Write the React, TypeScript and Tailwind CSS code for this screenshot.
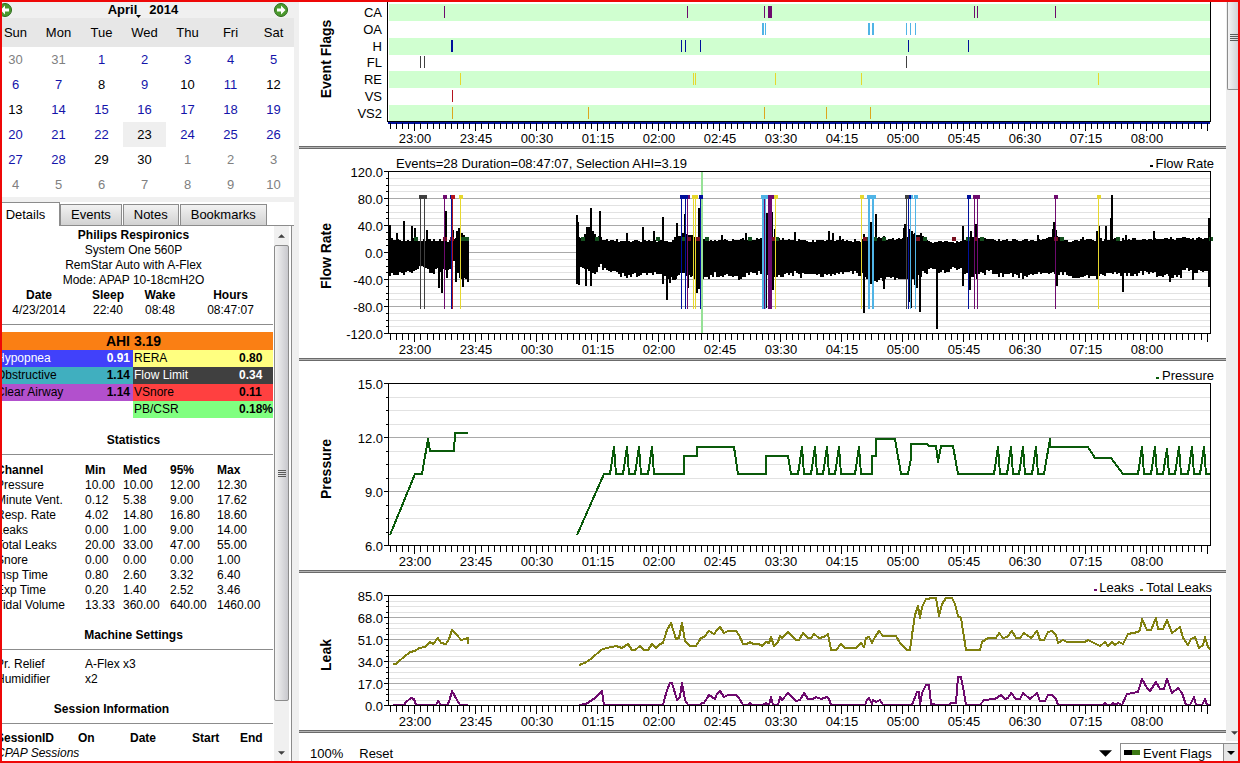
import React from "react";
import clsx from "clsx";

type Point = [number, number];

const WEEKDAYS = ["Sun", "Mon", "Tue", "Wed", "Thu", "Fri", "Sat"];

const WEEKS = [
  [30, 31, 1, 2, 3, 4, 5],
  [6, 7, 8, 9, 10, 11, 12],
  [13, 14, 15, 16, 17, 18, 19],
  [20, 21, 22, 23, 24, 25, 26],
  [27, 28, 29, 30, 1, 2, 3],
  [4, 5, 6, 7, 8, 9, 10],
];

// days of the month without recorded data
const EMPTY_DAYS = [8, 10, 12, 13, 23, 29, 30];

const STATS = [
  ["Pressure", "10.00", "10.00", "12.00", "12.30"],
  ["Minute Vent.", "0.12", "5.38", "9.00", "17.62"],
  ["Resp. Rate", "4.02", "14.80", "16.80", "18.60"],
  ["Leaks", "0.00", "1.00", "9.00", "14.00"],
  ["Total Leaks", "20.00", "33.00", "47.00", "55.00"],
  ["Snore", "0.00", "0.00", "0.00", "1.00"],
  ["Insp Time", "0.80", "2.60", "3.32", "6.40"],
  ["Exp Time", "0.20", "1.40", "2.52", "3.46"],
  ["Tidal Volume", "13.33", "360.00", "640.00", "1460.00"],
];

const TIMES = [
  "23:00", "23:45", "00:30", "01:15", "02:00", "02:45", "03:30",
  "04:15", "05:00", "05:45", "06:30", "07:15", "08:00",
];

// every chart shares the same time axis
const LEFT = 89;
const RIGHT = 911;
const TOP = 22;
const TICK = 6.094;

interface FlagRow {
  code: string;
  color: string;
  // [x, width]
  marks: Point[];
}

const FLAGS: FlagRow[] = [
  { code: "CA", color: "#6e0a6e", marks: [[144, 1], [387, 1], [464, 1], [468, 4], [674, 1], [677, 1], [755, 1]] },
  { code: "OA", color: "#50b4e6", marks: [[462, 2], [465, 1], [568, 2], [572, 2], [606, 1], [610, 1], [615, 1]] },
  { code: "H", color: "#00109b", marks: [[151, 2], [381, 1], [385, 1], [400, 1], [608, 1], [668, 1]] },
  { code: "FL", color: "#404040", marks: [[120, 1], [124, 1], [606, 1]] },
  { code: "RE", color: "#e6d72d", marks: [[160, 1], [393, 1], [395, 1], [475, 1], [561, 1], [798, 1]] },
  { code: "VS", color: "#b4141e", marks: [[152, 1]] },
  { code: "VS2", color: "#dca51e", marks: [[152, 1], [288, 1], [464, 1], [526, 1], [570, 1]] },
];

const PRESSURE_1: Point[] = [
  [90, 174], [115, 113], [122, 113], [128, 78], [130, 90], [154, 90], [155, 72], [168, 72],
];

const spike = (x: number, top = 86): Point[] => [[x - 4, 113], [x, top], [x + 2, 113]];

const PRESSURE_2: Point[] = [
  [277, 174], [304, 113],
  ...spike(314), ...spike(327), ...spike(339), ...spike(352),
  [384, 113], [384, 95], [397, 95], [397, 86], [434, 86], [438, 113], [466, 113], [466, 95], [488, 95], [491, 113],
  ...spike(502), ...spike(515), ...spike(527), ...spike(539), ...spike(559),
  [572, 113], [572, 95], [576, 95], [576, 78], [595, 78], [601, 113], [608, 113], [611, 97], [611, 83], [627, 83],
  [629, 85], [636, 85], [638, 101], [641, 85], [653, 85], [658, 113],
  ...spike(698), ...spike(711), ...spike(723), ...spike(736),
  [744, 113], [750, 78], [750, 86], [788, 86], [795, 97], [811, 97], [823, 113],
  ...spike(842), ...spike(855), ...spike(867, 88), ...spike(879), ...spike(892), ...spike(904),
  [911, 113],
];

const TOTAL_1: Point[] = [
  [93, 91], [96, 91], [99, 88], [104, 84], [110, 79], [115, 78], [119, 75], [125, 74], [130, 69], [133, 71],
  [138, 65], [141, 70], [146, 71], [149, 66], [152, 57], [157, 62], [161, 67], [165, 66], [168, 65], [168, 71],
];

const TOTAL_2: Point[] = [
  [279, 93], [281, 91], [285, 90], [292, 85], [301, 77], [306, 75], [312, 74], [316, 73], [322, 75], [328, 71],
  [332, 77], [335, 77], [340, 73], [344, 77], [348, 77], [352, 71], [356, 75], [360, 71], [363, 70], [367, 57],
  [371, 50], [376, 66], [379, 65], [382, 50], [385, 68], [390, 73], [396, 73], [401, 65], [404, 64], [409, 58],
  [414, 61], [417, 57], [420, 54], [424, 60], [428, 58], [436, 58], [439, 62], [443, 71], [447, 71], [450, 69],
  [453, 71], [459, 71], [462, 73], [466, 69], [469, 70], [471, 64], [474, 73], [478, 69], [480, 63], [482, 65],
  [488, 59], [496, 67], [499, 67], [503, 60], [508, 65], [511, 65], [514, 61], [519, 65], [524, 64], [528, 61],
  [531, 77], [536, 77], [541, 71], [545, 75], [556, 75], [561, 70], [564, 74], [566, 65], [569, 64], [572, 70],
  [575, 64], [579, 58], [583, 63], [596, 63], [600, 70], [607, 77], [610, 77], [613, 55], [615, 42], [618, 33],
  [620, 45], [622, 34], [626, 26], [633, 25], [636, 25], [639, 43], [642, 31], [646, 25], [652, 25], [655, 31],
  [658, 43], [661, 45], [666, 77], [680, 77], [682, 69], [688, 65], [696, 65], [699, 60], [703, 65], [707, 64],
  [712, 58], [716, 65], [720, 65], [724, 60], [731, 65], [737, 58], [740, 67], [744, 67], [748, 59], [752, 58],
  [756, 62], [758, 70], [763, 67], [767, 69], [785, 69], [788, 67], [794, 70], [800, 73], [805, 69], [808, 73],
  [812, 69], [815, 72], [819, 69], [823, 71], [828, 61], [838, 59], [840, 57], [842, 46], [847, 57], [851, 57],
  [856, 45], [858, 56], [863, 56], [867, 47], [872, 60], [880, 54], [883, 65], [888, 72], [891, 66], [895, 64],
  [899, 75], [903, 72], [905, 64], [908, 74], [911, 77],
];

const LEAKS_1: Point[] = [
  [93, 132], [104, 132], [106, 129], [111, 125], [114, 126], [116, 132], [136, 132], [138, 128], [141, 132],
  [147, 132], [149, 129], [152, 118], [157, 127], [160, 132], [168, 132],
];

const LEAKS_2: Point[] = [
  [279, 132], [286, 131], [295, 125], [302, 118], [304, 132], [363, 132], [367, 117], [370, 110], [372, 110],
  [377, 127], [380, 124], [382, 110], [385, 127], [388, 132], [400, 132], [402, 130], [404, 130], [409, 122],
  [415, 126], [417, 121], [420, 118], [424, 124], [428, 122], [436, 122], [439, 125], [443, 132], [448, 132],
  [450, 130], [452, 132], [463, 132], [466, 130], [469, 132], [471, 124], [473, 132], [478, 132], [480, 124],
  [482, 127], [488, 120], [496, 128], [500, 127], [504, 120], [508, 126], [513, 126], [516, 124], [521, 126],
  [527, 124], [529, 126], [531, 132], [565, 132], [567, 127], [569, 125], [572, 131], [573, 127], [576, 129],
  [580, 127], [583, 132], [612, 132], [617, 119], [619, 119], [620, 132], [622, 120], [626, 112], [629, 112],
  [631, 131], [634, 131], [636, 132], [649, 132], [651, 130], [656, 130], [658, 104], [661, 104], [664, 120],
  [666, 132], [680, 132], [684, 127], [695, 126], [701, 122], [705, 126], [708, 125], [711, 120], [716, 126],
  [720, 126], [723, 120], [730, 126], [737, 120], [740, 128], [745, 128], [748, 122], [752, 122], [756, 126],
  [758, 132], [803, 132], [805, 130], [807, 132], [811, 132], [813, 130], [815, 132], [818, 130], [822, 132],
  [827, 121], [838, 119], [842, 106], [847, 115], [850, 118], [856, 109], [860, 116], [864, 116], [867, 106],
  [872, 120], [878, 115], [882, 120], [886, 132], [890, 132], [894, 124], [896, 132], [902, 132], [905, 126],
  [907, 132], [911, 132],
];

// lower edge of the breathing wave
const FLOW_FLOOR: Point[] = [
  [89, 123], [105, 122], [120, 118], [130, 121], [150, 118], [153, 111], [156, 121], [162, 129], [169, 130],
  [276, 121], [282, 118], [290, 124], [295, 121], [300, 116], [310, 121], [325, 126], [345, 123], [360, 124],
  [370, 129], [380, 124], [400, 128], [415, 124], [430, 126], [440, 128], [450, 121], [462, 123], [470, 128],
  [480, 125], [495, 122], [500, 125], [520, 125], [545, 121], [560, 124], [575, 129], [600, 128], [620, 124],
  [630, 119], [640, 122], [655, 118], [670, 124], [685, 124], [688, 118], [692, 124], [720, 125], [760, 123],
  [780, 127], [800, 124], [830, 124], [850, 122], [860, 126], [880, 125], [884, 118], [893, 121], [911, 120],
];

const FLOW_CEILING: Point[] = [
  [89, 91], [150, 92], [158, 86], [162, 84], [165, 90], [276, 88], [282, 91], [285, 84], [292, 84], [300, 90],
  [310, 92], [370, 92], [378, 86], [390, 86], [395, 90], [402, 90], [410, 92], [470, 90], [510, 92], [560, 92],
  [568, 88], [580, 90], [604, 90], [612, 85], [622, 88], [630, 93], [655, 93], [672, 90], [730, 92], [752, 88],
  [758, 88], [765, 93], [800, 91], [820, 91], [880, 90], [911, 90],
];

const FLOW_PEAKS: Point[] = [
  [90, 76], [97, 84], [104, 72], [112, 77], [115, 79], [127, 81], [146, 62], [153, 81], [157, 82], [159, 79],
  [277, 66], [278, 73], [287, 78], [289, 78], [291, 59], [293, 82], [300, 62], [327, 84], [343, 78], [354, 82],
  [363, 68], [377, 74], [385, 65], [399, 59], [402, 83], [422, 86], [446, 84], [467, 64], [469, 76], [472, 63],
  [475, 80], [495, 83], [529, 82], [533, 84], [540, 87], [564, 85], [571, 73], [576, 65], [584, 87], [604, 79],
  [605, 75], [609, 80], [612, 82], [621, 84], [663, 77], [671, 82], [676, 75], [738, 86], [753, 80], [754, 73],
  [756, 81], [783, 88], [797, 82], [799, 77], [806, 77], [811, 69], [812, 46], [826, 86], [854, 82], [909, 69],
];

const FLOW_DIPS: Point[] = [
  [139, 139], [142, 144], [147, 129], [156, 133], [163, 138], [277, 135], [279, 136], [286, 137], [291, 137],
  [363, 135], [367, 151], [370, 134], [376, 130], [388, 139], [397, 144], [399, 140], [466, 159], [473, 141],
  [469, 132], [564, 164], [571, 135], [584, 140], [609, 153], [611, 159], [615, 136], [617, 139], [620, 163],
  [637, 180], [663, 137], [670, 141], [677, 130], [723, 130], [757, 137], [797, 130], [823, 143], [870, 133],
  [893, 131], [909, 138],
];

const GREEN_DOTS = [
  116, 163, 167, 283, 297, 358, 384, 407, 450, 477, 568, 575, 584, 625, 668, 682, 762, 818, 911,
];
const RED_DOTS = [145, 152, 389, 398, 473, 565, 618, 654, 676, 756];

const toPoints = (pts: Point[]) => pts.map((p) => p.join(",")).join(" ");

function lerp(pts: Point[], x: number) {
  const i = pts.findIndex((p) => p[0] >= x);
  if (i <= 0) return pts[i === 0 ? 0 : pts.length - 1][1];
  const [x0, y0] = pts[i - 1];
  const [x1, y1] = pts[i];
  return y0 + ((x - x0) / (x1 - x0)) * (y1 - y0);
}

function jitter(n: number) {
  const v = Math.sin(n * 12.9898) * 43758.5453;
  return v - Math.floor(v);
}

function wave(from: number, to: number) {
  let d = "";
  for (let x = from; x < to; x += 2) {
    const top = Math.round(lerp(FLOW_CEILING, x) + jitter(x) * 3 - 2);
    const bottom = Math.round(lerp(FLOW_FLOOR, x) + jitter(x + 500) * 5 - 1);
    d += `M${x} ${top}h${Math.min(2, to - x)}V${bottom}H${x}z`;
  }
  return d;
}

function Frame({
  height,
  title,
  titleY,
  labels,
  children,
}: {
  height: number;
  title: string;
  titleY: number;
  labels: string[];
  children: React.ReactNode;
}) {
  const step = height / (labels.length - 1);
  const bottom = TOP + height;
  const minor = (labels.length - 1) * 4;

  return (
    <svg
      viewBox={`-1 0 927 ${height + 47}`}
      className="block w-full bg-white font-['Liberation_Sans',sans-serif] text-[13px]"
      role="img"
      aria-label={title}
    >
      <g shapeRendering="crispEdges">
        {Array.from({ length: minor + 1 }, (_, i) => {
          const y = Math.round(TOP + (i * step) / 4);
          const major = i % 4 === 0;
          return (
            <g key={i}>
              <rect x={LEFT} y={y} width={RIGHT - LEFT} height="1" fill={major ? "#a9a9a9" : "#e2e2e2"} />
              <rect x={major ? 84 : 86} y={y} width={major ? 5 : 3} height="1" fill="#000" />
            </g>
          );
        })}
      </g>
      {labels.map((l, i) => (
        <text key={l} x="83" y={Math.round(TOP + i * step) + 6} textAnchor="end">
          {l}
        </text>
      ))}
      <YTitle y={titleY}>{title}</YTitle>
      {children}
      <path
        d={`M88.5 ${TOP}.5H910.5V${bottom}.5H88.5z`}
        fill="none"
        stroke="#000"
        shapeRendering="crispEdges"
      />
      <TimeAxis y={bottom + 1} />
    </svg>
  );
}

function YTitle({ y, children }: { y: number; children: string }) {
  return (
    <text transform={`translate(31 ${y}) rotate(-90)`} textAnchor="middle" className="text-sm font-bold">
      {children}
    </text>
  );
}

function TimeAxis({ y }: { y: number }) {
  return (
    <g>
      <g shapeRendering="crispEdges">
        {Array.from({ length: 135 }, (_, k) => (
          <rect
            key={k}
            x={Math.round(90 + k * TICK)}
            y={y}
            width="1"
            height={k % 10 === 4 ? 8 : 6}
          />
        ))}
      </g>
      {TIMES.map((t, i) => (
        <text key={t} x={Math.round(90 + (4 + i * 10) * TICK) + 1} y={y + 20} textAnchor="middle">
          {t}
        </text>
      ))}
    </g>
  );
}

function Trace({ points, color }: { points: Point[]; color: string }) {
  return (
    <polyline
      points={toPoints(points)}
      fill="none"
      stroke={color}
      strokeWidth="2"
      strokeLinejoin="round"
      shapeRendering="crispEdges"
    />
  );
}

function EventFlagsChart() {
  return (
    <svg
      viewBox="-1 0 927 144"
      className="block w-full bg-white font-['Liberation_Sans',sans-serif] text-[13px]"
      role="img"
      aria-label="Event Flags"
    >
      {FLAGS.map((row, i) => {
        const y = Math.round(2 + i * 16.8);
        return (
          <g key={row.code} shapeRendering="crispEdges">
            {i % 2 === 0 && <rect x="89" y={y} width="821" height="17" fill="#d0ffd0" />}
            {row.marks.map(([x, w]) => (
              <rect key={x} x={x} y={y + 2} width={w} height="12" fill={row.color} />
            ))}
            <text x="82" y={y + 13} textAnchor="end">
              {row.code}
            </text>
          </g>
        );
      })}
      <YTitle y={57}>Event Flags</YTitle>
      <rect x="87" y="0" width="1" height="120" />
      <rect x="910" y="0" width="1" height="120" />
      <rect x="87" y="119" width="824" height="1" />
      <rect x="88" y="120" width="822" height="2" fill="#00109b" />
      <TimeAxis y={121} />
    </svg>
  );
}

function FlowChart() {
  return (
    <Frame
      height={162}
      title="Flow Rate"
      titleY={107}
      labels={["120.0", "80.0", "40.0", "0.0", "-40.0", "-80.0", "-120.0"]}
    >
      <text x="96" y="19">
        Events=28 Duration=08:47:07, Selection AHI=3.19
      </text>
      <rect x="850" y="16" width="3" height="2" />
      <text x="914" y="19" textAnchor="end">
        Flow Rate
      </text>
      <g shapeRendering="crispEdges">
        <path d={wave(89, 169) + wave(276, 911)} />
        {FLOW_PEAKS.map(([x, y]) => (
          <rect key={x} x={x - 1} y={y} width="2" height={104 - y} />
        ))}
        {FLOW_DIPS.map(([x, y]) => (
          <rect key={x} x={x - 1} y="104" width="2" height={y - 104} />
        ))}
        {GREEN_DOTS.map((x) => (
          <rect key={x} x={x - 2} y="88" width="4" height="4" fill="#14501e" />
        ))}
        {RED_DOTS.map((x) => (
          <rect key={x} x={x - 2} y="88" width="4" height="4" fill="#780f1e" />
        ))}
        <rect x="401" y="23" width="2" height="161" fill="#96e196" />
        {FLAGS.filter((row) => row.code !== "VS2").map((row) =>
          row.marks.map(([x, w]) => (
            <g key={row.code + x} fill={row.color}>
              <rect x={x} y="48" width={w} height="112" />
              <rect x={x - 1} y="46" width={w + 3} height="4" />
            </g>
          ))
        )}
      </g>
    </Frame>
  );
}

function PressureChart() {
  return (
    <Frame height={162} title="Pressure" titleY={108} labels={["15.0", "12.0", "9.0", "6.0"]}>
      <rect x="856" y="16" width="3" height="2" fill="#0a5a0a" />
      <text x="914" y="19" textAnchor="end">
        Pressure
      </text>
      <Trace points={PRESSURE_1} color="#0a5a0a" />
      <Trace points={PRESSURE_2} color="#0a5a0a" />
    </Frame>
  );
}

function LeakChart() {
  return (
    <Frame height={110} title="Leak" titleY={82} labels={["85.0", "68.0", "51.0", "34.0", "17.0", "0.0"]}>
      <rect x="794" y="16" width="3" height="2" fill="#6e0a6e" />
      <text x="834" y="19" textAnchor="end">
        Leaks
      </text>
      <rect x="840" y="16" width="3" height="2" fill="#80800f" />
      <text x="912" y="19" textAnchor="end">
        Total Leaks
      </text>
      <Trace points={TOTAL_1} color="#80800f" />
      <Trace points={TOTAL_2} color="#80800f" />
      <Trace points={LEAKS_1} color="#6e0a6e" />
      <Trace points={LEAKS_2} color="#6e0a6e" />
    </Frame>
  );
}

function Divider() {
  return <div className="h-[3px] border-y border-[#6b6b6b] bg-[#b4b4b4]" />;
}

function ArrowButton({ label, flip }: { label: string; flip?: boolean }) {
  return (
    <button aria-label={label} className="h-4 w-4 shrink-0">
      <svg viewBox="0 0 16 16" className={clsx("h-4 w-4", flip && "rotate-180")}>
        <circle cx="8" cy="8" r="6.5" fill="#4c9a2e" stroke="#2d6a1c" />
        <path d="M4 6.500h4V3.500L12.500 8 8 12.500V9.500H4z" fill="#fff" />
      </svg>
    </button>
  );
}

function Calendar() {
  return (
    <section className="-ml-2 w-[301px] bg-white">
      <div className="flex h-4 items-center justify-between bg-[#f0f0f0] pl-[3px] pr-[6px] text-[13px] font-bold">
        <ArrowButton label="Previous month" flip />
        <div className="flex items-center gap-3">
          <button className="relative leading-4">
            April
            <svg viewBox="0 0 5 3" className="absolute -right-1 bottom-0 h-[3px] w-[5px]">
              <path d="M0 0h5L2.500 3z" />
            </svg>
          </button>
          <button className="leading-4">2014</button>
        </div>
        <ArrowButton label="Next month" />
      </div>
      <table className="w-full table-fixed border-collapse text-center text-[13px]">
        <thead className="bg-[#e7e7e7]">
          <tr className="h-[29px]">
            {WEEKDAYS.map((d) => (
              <th key={d} scope="col" className="p-0 font-normal">
                {d}
              </th>
            ))}
          </tr>
        </thead>
        <tbody>
          {WEEKS.map((week, w) => (
            <tr key={w} className="h-[25px]">
              {week.map((day) => {
                const outside = (w === 0 && day > 20) || (w > 3 && day < 15);
                return (
                  <td
                    key={day}
                    className={clsx(
                      "p-0",
                      outside
                        ? "text-[#808080]"
                        : EMPTY_DAYS.includes(day)
                          ? "text-black"
                          : "text-[#1414aa]",
                      !outside && day === 23 && "bg-[#efefef]"
                    )}
                  >
                    {day}
                  </td>
                );
              })}
            </tr>
          ))}
        </tbody>
      </table>
    </section>
  );
}

function Tabs() {
  return (
    <div role="tablist" className="flex h-6 items-end bg-white text-[13px]">
      <button role="tab" aria-selected="true" className="h-6 w-[58px] border-r border-t border-[#8c8c8c] bg-white pr-2.5">
        Details
      </button>
      <div className="flex flex-1 gap-px border-b border-[#8c8c8c]">
        {["Events", "Notes", "Bookmarks"].map((t) => (
          <button
            key={t}
            role="tab"
            aria-selected="false"
            className="h-[21px] border-x border-t border-[#8c8c8c] bg-linear-to-b from-[#f2f2f2] to-[#d2d2d2] px-2.5"
          >
            {t}
          </button>
        ))}
      </div>
    </div>
  );
}

function Heading({ children, className }: { children: string; className?: string }) {
  return (
    <h2 className={clsx("border-b border-[#8c8c8c] pb-1.5 text-center font-bold", className)}>
      {children}
    </h2>
  );
}

function Details() {
  return (
    <div className="-ml-2 w-[279px] shrink-0 pt-0.5 text-xs leading-[15px]">
      <div className="text-center">
        <p className="font-bold">Philips Respironics</p>
        <p>System One 560P</p>
        <p>RemStar Auto with A-Flex</p>
        <p>Mode: APAP 10-18cmH2O</p>
      </div>
      <table className="w-full table-fixed text-center">
        <thead>
          <tr>
            <th scope="col" className="w-[90px]">Date</th>
            <th scope="col" className="w-12">Sleep</th>
            <th scope="col" className="w-14">Wake</th>
            <th scope="col">Hours</th>
          </tr>
        </thead>
        <tbody>
          <tr>
            <td>4/23/2014</td>
            <td>22:40</td>
            <td>08:48</td>
            <td>08:47:07</td>
          </tr>
        </tbody>
      </table>
      <hr className="mb-[7px] mt-1.5 border-[#8c8c8c]" />

      {/* event index summary */}
      <table className="w-full table-fixed text-left leading-[17px]">
        <colgroup>
          <col className="w-[100px]" />
          <col className="w-[39px]" />
          <col className="w-[106px]" />
          <col />
        </colgroup>
        <thead>
          <tr className="bg-[#fa7f14]">
            <th colSpan={4} scope="colgroup" className="text-center text-sm leading-[18px]">
              AHI 3.19
            </th>
          </tr>
        </thead>
        <tbody>
          <tr>
            <td className="bg-[#4141fa] pl-0.5 text-white">Hypopnea</td>
            <td className="bg-[#4141fa] pr-[3px] text-right font-bold text-white">0.91</td>
            <td className="bg-[#ffff80] pl-px">RERA</td>
            <td className="bg-[#ffff80] font-bold">0.80</td>
          </tr>
          <tr>
            <td className="bg-[#40afbf] pl-0.5">Obstructive</td>
            <td className="bg-[#40afbf] pr-[3px] text-right font-bold">1.14</td>
            <td className="bg-[#404040] pl-px text-white">Flow Limit</td>
            <td className="bg-[#404040] font-bold text-white">0.34</td>
          </tr>
          <tr>
            <td className="bg-[#b250cd] pl-0.5">Clear Airway</td>
            <td className="bg-[#b250cd] pr-[3px] text-right font-bold">1.14</td>
            <td className="bg-[#ff4040] pl-px">VSnore</td>
            <td className="bg-[#ff4040] font-bold">0.11</td>
          </tr>
          <tr>
            <td colSpan={2} />
            <td className="bg-[#80ff80] pl-px">PB/CSR</td>
            <td className="bg-[#80ff80] font-bold">0.18%</td>
          </tr>
        </tbody>
      </table>

      <Heading className="mt-[15px]">Statistics</Heading>
      <table className="mt-2 w-full table-fixed text-left">
        <thead>
          <tr>
            <th scope="col" className="w-[91px] pl-0.5">Channel</th>
            <th scope="col" className="w-[38px]">Min</th>
            <th scope="col" className="w-[47px]">Med</th>
            <th scope="col" className="w-[47px]">95%</th>
            <th scope="col">Max</th>
          </tr>
        </thead>
        <tbody>
          {STATS.map(([name, ...values]) => (
            <tr key={name}>
              <td className="pl-0.5">{name}</td>
              {values.map((v, i) => (
                <td key={i}>{v}</td>
              ))}
            </tr>
          ))}
        </tbody>
      </table>

      <Heading className="mt-[15px]">Machine Settings</Heading>
      <dl className="mt-[7px] grid grid-cols-[91px_1fr]">
        <dt className="pl-0.5">Pr. Relief</dt>
        <dd>A-Flex x3</dd>
        <dt className="pl-0.5">Humidifier</dt>
        <dd>x2</dd>
      </dl>

      <Heading className="mt-[15px] pr-11">Session Information</Heading>
      <table className="mt-[7px] w-full table-fixed text-left">
        <thead>
          <tr>
            <th scope="col" className="w-[84px] pl-0.5">SessionID</th>
            <th scope="col" className="w-[52px]">On</th>
            <th scope="col" className="w-[62px]">Date</th>
            <th scope="col" className="w-12">Start</th>
            <th scope="col">End</th>
          </tr>
        </thead>
        <tbody>
          <tr>
            <td colSpan={5} className="pl-0.5 italic">CPAP Sessions</td>
          </tr>
        </tbody>
      </table>
    </div>
  );
}

function Grip() {
  return (
    <div className="flex h-[7px] w-2 flex-col justify-between">
      <div className="h-px bg-[#5a5a5a]" />
      <div className="h-px bg-[#5a5a5a]" />
      <div className="h-px bg-[#5a5a5a]" />
      <div className="h-px bg-[#5a5a5a]" />
    </div>
  );
}

function Triangle({ up, className }: { up?: boolean; className: string }) {
  return (
    <svg viewBox="0 0 10 5" className={clsx(className, up && "rotate-180")}>
      <path d="M0 0h10L5 5z" fill="currentColor" />
    </svg>
  );
}

export default function App() {
  return (
    <div className="flex h-screen overflow-hidden border-2 border-[#ee0808] bg-[#f0f0f0] font-['Liberation_Sans',Arial,sans-serif] text-black">
      {/* Sidebar */}
      <aside className="mr-[5px] flex w-[292px] shrink-0 flex-col overflow-hidden">
        <Calendar />
        <div className="mt-[5px]">
          <Tabs />
        </div>
        <div className="mr-[2px] flex min-h-0 flex-1 overflow-hidden border-r border-[#8c8c8c] bg-white">
          <Details />
          <div className="ml-px flex w-[15px] flex-col items-center bg-[#f0f0f0]">
            <button aria-label="Scroll up" className="flex h-[19px] w-full shrink-0 items-center justify-center">
              <Triangle up className="h-[4px] w-[7px] text-[#404040]" />
            </button>
            <div className="flex w-[15px] flex-1 items-center justify-center rounded-xs border border-[#8c8c8c] bg-linear-to-r from-[#f4f4f4] to-[#c8c8cd]">
              <Grip />
            </div>
            <button aria-label="Scroll down" className="flex h-[60px] w-full shrink-0 items-end justify-center pb-[6px]">
              <Triangle className="h-[4px] w-[7px] text-[#404040]" />
            </button>
          </div>
        </div>
      </aside>

      {/* Graphs */}
      <main className="flex min-w-0 flex-1 flex-col bg-white">
        <div className="flex min-h-0 flex-1">
          <div className="min-w-0 flex-1 overflow-hidden">
            <EventFlagsChart />
            <Divider />
            <FlowChart />
            <Divider />
            <PressureChart />
            <Divider />
            <LeakChart />
            <Divider />
          </div>
          <div className="flex w-3 shrink-0 flex-col justify-between bg-[#eeeeee] pl-px">
            <div className="flex h-22 items-center justify-end overflow-hidden rounded-bl-xs border-b border-l border-[#8c8c8c] bg-linear-to-r from-[#f4f4f4] to-[#d2d2d7] pb-4">
              <Grip />
            </div>
            <button aria-label="Scroll graphs down" className="flex h-4 items-center justify-end">
              <Triangle className="h-[4px] w-[7px] text-[#404040]" />
            </button>
          </div>
        </div>
        <footer className="flex h-5 shrink-0 items-end text-[13px] leading-[14px]">
          <span className="pl-[11px]">100%</span>
          <button className="ml-4">Reset</button>
          <button aria-label="Show graphs" className="ml-auto mr-2 pb-1">
            <Triangle className="h-[7px] w-[13px]" />
          </button>
          <div className="relative flex h-[18px] w-[118px] items-center border-l border-t border-[#8c8c8c]">
            <div aria-hidden="true" className="pointer-events-none absolute left-[3px] flex h-[5px] w-4">
              <div className="flex-1 bg-black" />
              <div className="flex-1 bg-[#3c7814]" />
            </div>
            <select aria-label="Graph" className="h-full w-full appearance-none bg-transparent pl-[22px] pt-0.5">
              <option>Event Flags</option>
            </select>
            <div className="pointer-events-none absolute right-0 top-0 flex h-full w-[15px] items-center justify-center border-l border-[#8c8c8c] bg-[#e6e6e6]">
              <Triangle className="h-[4px] w-[8px]" />
            </div>
          </div>
        </footer>
      </main>
    </div>
  );
}
